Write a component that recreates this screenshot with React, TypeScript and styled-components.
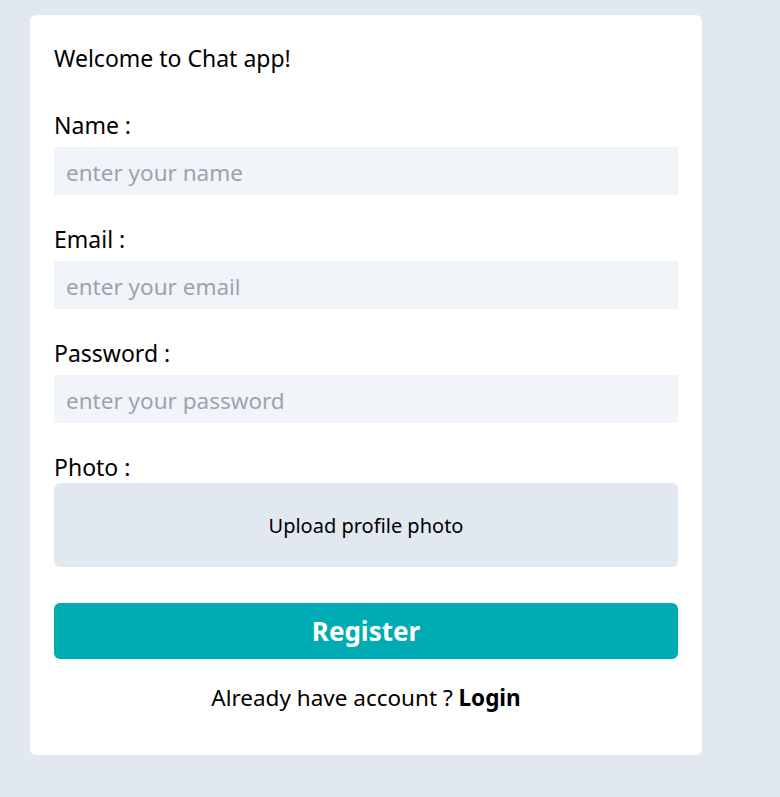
import React from "react";
import styled, { createGlobalStyle } from "styled-components";

const GlobalStyle = createGlobalStyle`
  html, body {
    margin: 0;
    padding: 0;
    background: #e2e8f0;
    font-family: "Noto Sans", "Open Sans", sans-serif;
    color: #000;
  }
  * { box-sizing: border-box; }
`;

const Page = styled.div`
  min-height: 797px;
  padding: 15px 0 0 30px;
`;

const Card = styled.div`
  width: 672px;
  background: #fff;
  border-radius: 6px;
  padding: 24px;
`;

const Title = styled.h3`
  margin: 0;
  font-size: 23px;
  line-height: 36px;
  font-weight: 400;
  padding-top: 1px;
  height: 36px;
`;

const Form = styled.form`
  display: grid;
  gap: 24px;
  margin-top: 30px;
`;

const Field = styled.div<{ $gap?: number }>`
  display: flex;
  flex-direction: column;
  gap: ${(p) => (p.$gap ?? 6)}px;
`;

const Label = styled.label`
  font-size: 23px;
  line-height: 36px;
  height: 36px;
  padding-top: 2px;
`;

const Input = styled.input`
  height: 48px;
  border: none;
  outline: none;
  background: #f1f5f9;
  padding: 2px 12px 0;
  font-family: inherit;
  font-size: 22.5px;
  color: #000;
  &::placeholder {
    color: #9ca3af;
  }
`;

const Upload = styled.label`
  height: 84px;
  display: flex;
  align-items: center;
  justify-content: center;
  background: #e2e8f0;
  border-radius: 6px;
  font-size: 20px;
  cursor: pointer;
`;

const Button = styled.button`
  margin-top: 12px;
  height: 56px;
  border: none;
  border-radius: 6px;
  background: #00acb4;
  color: #fff;
  font-family: inherit;
  font-size: 26px;
  font-weight: 700;
  cursor: pointer;
`;

const Footer = styled.p`
  margin: 21px 0 15px;
  text-align: center;
  font-size: 22.5px;
  line-height: 36px;
`;

const LoginLink = styled.a`
  font-weight: 700;
  color: #000;
  text-decoration: none;
`;

export default function App() {
  return (
    <>
      <GlobalStyle />
      <Page>
        <Card>
          <Title>Welcome to Chat app!</Title>
          <Form onSubmit={(e) => e.preventDefault()}>
            <Field>
              <Label htmlFor="name">Name :</Label>
              <Input id="name" placeholder="enter your name" />
            </Field>
            <Field>
              <Label htmlFor="email">Email :</Label>
              <Input id="email" placeholder="enter your email" />
            </Field>
            <Field>
              <Label htmlFor="password">Password :</Label>
              <Input id="password" type="password" placeholder="enter your password" />
            </Field>
            <Field $gap={0}>
              <Label htmlFor="photo">Photo :</Label>
              <Upload htmlFor="photo">Upload profile photo</Upload>
            </Field>
            <Button type="submit">Register</Button>
          </Form>
          <Footer>
            Already have account ? <LoginLink href="#">Login</LoginLink>
          </Footer>
        </Card>
      </Page>
    </>
  );
}
